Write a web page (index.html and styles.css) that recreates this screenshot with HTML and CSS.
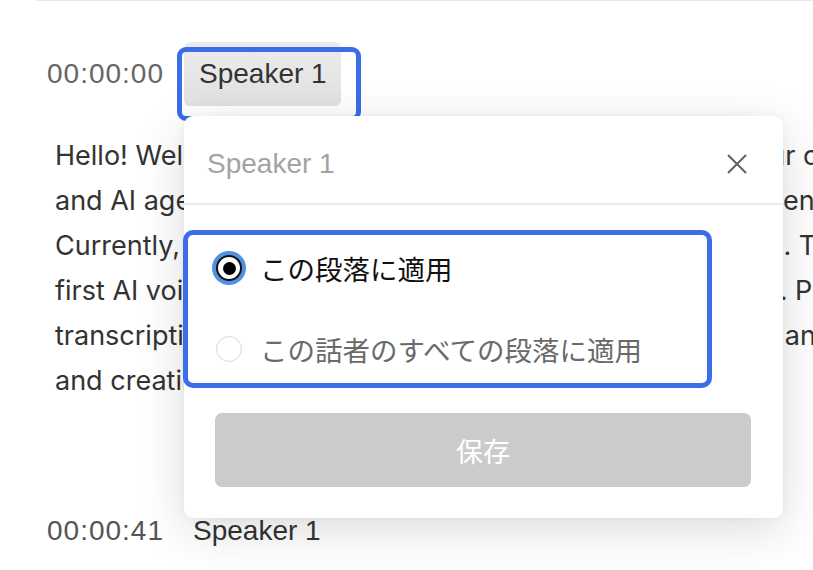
FILE: index.html
```html
<!DOCTYPE html>
<html lang="ja">
<head>
<meta charset="utf-8">
<title>Speaker</title>
<link rel="stylesheet" href="styles.css">
</head>
<body>
<div class="content">
  <section class="segment">
    <div class="seg-head">
      <span class="time">00:00:00</span>
      <span class="chip chip-active">Speaker 1<span class="mark mark-chip"></span></span>
    </div>
    <div class="para">
      <div class="line">Hello! Welcome to the world of easy voice notes with your company.</div>
      <div class="line">and AI agents that turn each conversation into clean content.</div>
      <div class="line">Currently, we support over one hundred major languages. They</div>
      <div class="line">first AI voice recorder with built-in transcription and clips. Plus</div>
      <div class="line">transcription, summaries, translation, mind maps, search and more,</div>
      <div class="line">and creating content from every conversation.</div>
    </div>
  </section>
  <section class="segment segment-2">
    <div class="seg-head">
      <span class="time">00:00:41</span>
      <span class="chip chip-plain">Speaker 1</span>
    </div>
  </section>

  <div class="modal">
    <div class="modal-head">
      <span class="placeholder">Speaker 1</span>
      <svg class="close" width="20" height="20" viewBox="0 0 20 20"><path d="M1.5 1.5 L18.5 18.5 M18.5 1.5 L1.5 18.5" stroke="#5f5f5f" stroke-width="1.9" stroke-linecap="round" fill="none"/></svg>
    </div>
    <div class="modal-body">
      <div class="options">
        <label class="opt opt-on"><span class="radio radio-on"><span class="dot"></span></span><span class="opt-text">この段落に適用</span></label>
        <label class="opt opt-off"><span class="radio radio-off"></span><span class="opt-text">この話者のすべての段落に適用</span></label>
      </div>
      <button class="save">保存</button>
    </div>
  </div>
</div>
</body>
</html>
```

FILE: styles.css
```css
html, body {
  margin: 0;
  padding: 0;
  background: #fff;
  overflow: hidden;
  width: 813px;
  height: 570px;
}
body {
  font-family: Inter, "Noto Sans CJK JP", sans-serif;
  color: #333;
}
.content {
  position: relative;
  margin-left: 36px;
  border-top: 1px solid #e8e8e8;
  height: 569px;
  overflow: hidden;
}
.segment {
  padding-left: 11px;
}
.seg-head {
  display: flex;
  align-items: center;
  padding-top: 41px;
  height: 64px;
}
.time {
  width: 137px;
  font-family: "Liberation Sans", sans-serif;
  font-size: 28px;
  color: #666;
  letter-spacing: 1px;
}
.chip {
  position: relative;
  font-family: "Liberation Sans", sans-serif;
  font-size: 28px;
  color: #333;
  line-height: 64px;
  height: 64px;
  border-radius: 6px;
}
.chip-active {
  padding: 0 14px 0 15px;
  background: linear-gradient(#ececec, #e1e1e1);
}
.chip-plain {
  padding: 0 9px;
}
.mark {
  position: absolute;
  border: 5px solid #3a6de6;
  border-radius: 9px;
  box-sizing: border-box;
}
.mark-chip {
  left: -7px;
  top: 5px;
  width: 184px;
  height: 74px;
}
.para {
  padding-left: 8px;
  margin-top: 27px;
  font-size: 27px;
  line-height: 45px;
  color: #333;
}
.line {
  white-space: nowrap;
}
.segment-2 .seg-head {
  padding-top: 96px;
}
.segment-2 .time {
  color: #555;
}
.modal {
  position: absolute;
  left: 148px;
  top: 115px;
  width: 599px;
  height: 402px;
  background: #fff;
  border-radius: 9px;
  box-shadow: 0 12px 50px rgba(0, 0, 0, 0.14), 0 0 8px rgba(0, 0, 0, 0.05);
}
.modal-head {
  display: flex;
  align-items: center;
  justify-content: space-between;
  height: 89px;
  padding: 0 36px 0 23px;
  border-bottom: 2px solid #ececec;
  box-sizing: border-box;
}
.placeholder {
  font-family: "Liberation Sans", sans-serif;
  font-size: 28px;
  color: #a3a3a3;
  margin-top: 8px;
}
.close {
  margin-top: 8px;
}
.modal-body {
  padding: 25px 31px 31px 31px;
  display: flex;
  flex-direction: column;
  gap: 25px;
}
.options {
  margin-left: -32px;
  width: 529px;
  height: 158px;
  box-sizing: border-box;
  border: 5px solid #3a6de6;
  border-radius: 10px;
  padding: 13px 0 14px 28px;
  display: flex;
  flex-direction: column;
  gap: 41px;
}
.opt {
  display: flex;
  align-items: center;
  height: 40px;
  gap: 18px;
  font-size: 27.5px;
}
.opt-on .opt-text {
  color: #111;
}
.opt-off .opt-text {
  color: #6a6a6a;
}
.radio {
  width: 26px;
  height: 26px;
  border-radius: 50%;
  box-sizing: border-box;
  display: flex;
  align-items: center;
  justify-content: center;
  flex: none;
}
.radio-on {
  border: 2.5px solid #111;
  background: #fff;
  box-shadow: 0 0 0 4px #4f92e3;
}
.dot {
  width: 13px;
  height: 13px;
  border-radius: 50%;
  background: #000;
}
.radio-off {
  border: 1.5px solid #d8d8d8;
  background: #fff;
}
.save {
  width: 536px;
  height: 74px;
  border: none;
  border-radius: 7px;
  background: #cbcbcb;
  color: #fff;
  font-family: "Noto Sans CJK JP", sans-serif;
  font-size: 27px;
  padding: 0;
}
```
